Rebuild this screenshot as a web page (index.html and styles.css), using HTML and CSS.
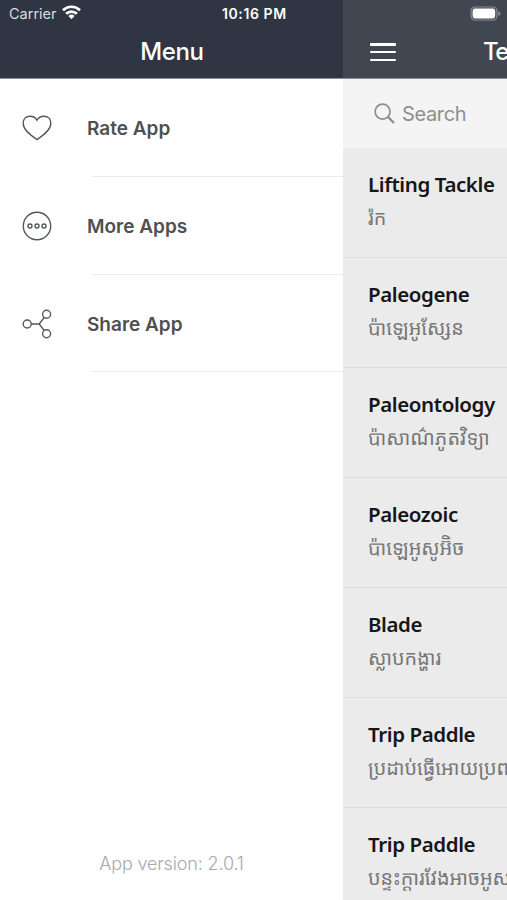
FILE: index.html
```
<!DOCTYPE html>
<html lang="en">
<head>
  <meta charset="utf-8">
  <title>Menu</title>
  <link rel="stylesheet" href="styles.css">
</head>
<body>
  <div class="app">
    <div class="status-bar">
      <span class="carrier">Carrier</span>
      <svg class="wifi" width="19" height="15" viewBox="0 0 19 15" fill="none" stroke="#fff" stroke-width="2.7">
        <path d="M1 5.2a12.2 12.2 0 0 1 17 0"/>
        <path d="M4.1 8.7a7.8 7.8 0 0 1 10.8 0"/>
        <path d="M9.5 14.2L6.4 11a4.5 4.5 0 0 1 6.2 0z" fill="#fff" stroke="none"/>
      </svg>
      <span class="time">10:16 PM</span>
      <svg class="battery" width="31" height="15" viewBox="0 0 31 15">
        <rect x="1" y="1" width="26" height="13" rx="4" fill="none" stroke="#8b8f96" stroke-width="1.2"/>
        <rect x="2.6" y="2.6" width="22.6" height="9.8" rx="2.4" fill="#fff"/>
        <path d="M28.4 5v5q2-1 2-2.5t-2-2.5z" fill="#8b8f96"/>
      </svg>
    </div>

    <div class="menu">
      <div class="menu-header"><h1>Menu</h1></div>
      <ul class="menu-list">
        <li>
          <svg class="icon" viewBox="0 0 30 30">
            <path d="M15 26.6C10 23 1.200 17.5 1.200 10.2C1.2 5.8 4.2 3.2 8 3.2C11.2 3.2 13.8 5 15 7.3C16.2 5 18.8 3.2 22 3.2C25.8 3.2 28.8 5.8 28.8 10.2C28.8 17.5 20 23 15 26.6z"/>
          </svg>
          <span class="label">Rate App</span>
        </li>
        <li>
          <svg class="icon" viewBox="0 0 30 30">
            <circle cx="15" cy="15" r="13.7"/>
            <circle cx="8" cy="15" r="2"/>
            <circle cx="15" cy="15" r="2"/>
            <circle cx="22" cy="15" r="2"/>
          </svg>
          <span class="label">More Apps</span>
        </li>
        <li>
          <svg class="icon" viewBox="0 0 30 30">
            <circle cx="5.2" cy="15" r="4"/>
            <circle cx="24.6" cy="5.3" r="4"/>
            <circle cx="24.6" cy="24.7" r="4"/>
            <path d="M9.2 15H17.2M22.2 8.5L17.2 15L22.2 21.5"/>
          </svg>
          <span class="label">Share App</span>
        </li>
      </ul>
      <p class="version">App version: 2.0.1</p>
    </div>

    <div class="content">
      <div class="content-header">
        <div class="hamburger"><i></i><i></i><i></i></div>
        <h2>Te</h2>
      </div>
      <div class="search">
        <svg width="21" height="21" viewBox="0 0 21 21" fill="none" stroke="#8e8e8e" stroke-width="1.7">
          <circle cx="8.6" cy="8.6" r="7.5"/>
          <path d="M13.9 13.9L20 20" stroke-width="2.2"/>
        </svg>
        <span>Search</span>
      </div>
      <ul class="terms">
        <li><b>Lifting Tackle</b><span>រ៉ក</span></li>
        <li><b>Paleogene</b><span>ប៉ាឡេអូស្សែន</span></li>
        <li><b>Paleontology</b><span>ប៉ាសាណ៌ភូតវិទ្យា</span></li>
        <li><b>Paleozoic</b><span>ប៉ាឡេអូសូអ&zwnj;៊ិច</span></li>
        <li><b>Blade</b><span>ស្លាបកង្ហារ</span></li>
        <li><b>Trip Paddle</b><span>ប្រដាប់ធ្វើអោយប្រព</span></li>
        <li><b>Trip Paddle</b><span>បន្ទះក្ដារវែងអាចអូស</span></li>
      </ul>
    </div>
  </div>
</body>
</html>
```
FILE: styles.css
```
* {
  box-sizing: border-box;
}
body {
  margin: 0;
  font-family: Inter, "Liberation Sans", sans-serif;
}
ul {
  list-style: none;
  margin: 0;
  padding: 0;
}
h1,
h2,
p {
  margin: 0;
}
.app {
  position: relative;
  display: flex;
  width: 507px;
  height: 900px;
  overflow: hidden;
  background: #fff;
}

/* status bar lies over both headers */
.status-bar {
  position: absolute;
  top: 0;
  left: 0;
  width: 100%;
  height: 27px;
  padding: 0 6px 0 9px;
  display: flex;
  align-items: center;
  color: #fff;
  font-size: 14.5px;
}
.carrier {
  width: 47px;
  color: #d8dbe1;
  white-space: nowrap;
}
.wifi {
  margin-left: 6px;
  margin-top: -2px;
}
.time {
  margin-left: 141px;
  font-size: 14px;
  font-weight: 600;
  letter-spacing: 0.6px;
  white-space: nowrap;
}
.battery {
  margin-left: auto;
}

.menu {
  width: 343px;
  flex: none;
  display: flex;
  flex-direction: column;
}
.menu-header {
  height: 79px;
  padding: 24px 0 0 1px;
  background: #2f3542;
  border-bottom: 1px solid #8d909b;
  text-align: center;
}
.menu-header h1,
.content-header h2 {
  color: #fff;
  font-size: 24px;
  line-height: 56px;
  font-weight: 500;
  letter-spacing: -0.4px;
}
.menu-list li {
  display: flex;
  align-items: center;
  height: 97.8px;
  padding: 1px 0 0 22px;
  background: linear-gradient(#ebebeb, #ebebeb) 92px 100% / 251px 1px no-repeat;
}
.icon {
  width: 30px;
  height: 30px;
  margin-right: 35px;
  fill: none;
  stroke: #54585c;
  stroke-width: 1.4;
}
.label {
  padding-top: 1px;
  font-size: 19px;
  font-weight: 600;
  color: #505050;
}
.version {
  margin-top: auto;
  padding-bottom: 25px;
  line-height: 22px;
  text-align: center;
  font-size: 18px;
  font-weight: 300;
  letter-spacing: -0.15px;
  color: #a9a9a9;
}

.content {
  width: 164px;
  flex: none;
  overflow: hidden;
  background: #ebebeb;
}
.content-header {
  display: flex;
  height: 79px;
  padding: 24px 0 0 27px;
  background: #414750;
  border-bottom: 1px solid #8d909b;
}
.content-header h2 {
  margin-left: 87px;
  letter-spacing: -1.5px;
}
.hamburger {
  flex: none;
  width: 26px;
  padding-top: 19px;
}
.hamburger i {
  display: block;
  height: 2.6px;
  margin-bottom: 5.2px;
  border-radius: 1px;
  background: #fff;
}
.search {
  display: flex;
  align-items: center;
  height: 69px;
  padding-left: 31px;
  background: #f4f4f4;
  font-size: 20px;
  letter-spacing: -0.35px;
  color: #8e8e8e;
}
.search span {
  margin-left: 7px;
}
.terms li {
  height: 110px;
  padding: 20px 0 0 25px;
  border-bottom: 1px solid #dcdcdc;
  white-space: nowrap;
}
.terms b {
  display: block;
  height: 32px;
  line-height: 32px;
  font-family: "Noto Sans", "Open Sans", sans-serif;
  font-size: 20.5px;
  font-weight: 600;
  letter-spacing: -0.4px;
  color: #161616;
}
.terms span {
  display: block;
  line-height: 36px;
  font-family: "Noto Sans Khmer", "Khmer OS", "Noto Sans", "DejaVu Sans", sans-serif;
  font-size: 19.8px;
  font-weight: 400;
  color: #777;
}
```
